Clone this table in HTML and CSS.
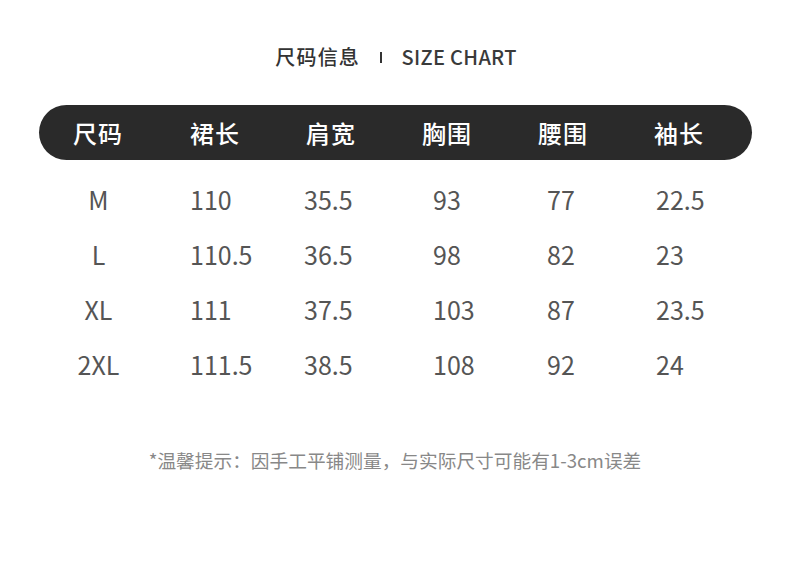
FILE: index.html
```html
<!DOCTYPE html>
<html lang="zh-CN">
<head>
<meta charset="utf-8">
<title>尺码信息</title>
<link rel="stylesheet" href="styles.css">
</head>
<body>
<div class="page">
  <div class="title">
    <span class="title-cn">尺码信息</span>
    <span class="sep"></span>
    <span class="title-en">SIZE CHART</span>
  </div>
  <div class="table">
    <div class="row head">
      <div class="c c0">尺码</div>
      <div class="c c1">裙长</div>
      <div class="c c2">肩宽</div>
      <div class="c c3">胸围</div>
      <div class="c c4">腰围</div>
      <div class="c c5">袖长</div>
    </div>
    <div class="body">
      <div class="row">
        <div class="c c0">M</div><div class="c c1">110</div><div class="c c2">35.5</div><div class="c c3">93</div><div class="c c4">77</div><div class="c c5">22.5</div>
      </div>
      <div class="row">
        <div class="c c0">L</div><div class="c c1">110.5</div><div class="c c2">36.5</div><div class="c c3">98</div><div class="c c4">82</div><div class="c c5">23</div>
      </div>
      <div class="row">
        <div class="c c0">XL</div><div class="c c1">111</div><div class="c c2">37.5</div><div class="c c3">103</div><div class="c c4">87</div><div class="c c5">23.5</div>
      </div>
      <div class="row">
        <div class="c c0">2XL</div><div class="c c1">111.5</div><div class="c c2">38.5</div><div class="c c3">108</div><div class="c c4">92</div><div class="c c5">24</div>
      </div>
    </div>
  </div>
  <p class="note">*温馨提示：因手工平铺测量，与实际尺寸可能有1-3cm误差</p>
</div>
</body>
</html>
```

FILE: styles.css
```css
html, body {
  margin: 0;
  padding: 0;
  background: #ffffff;
}
body {
  font-family: "Noto Sans CJK SC", "Noto Sans", sans-serif;
  width: 790px;
  height: 586px;
  overflow: hidden;
}
.page {
  display: flex;
  flex-direction: column;
  align-items: flex-start;
}
.title {
  align-self: center;
  margin-top: 42px;
  margin-left: 2px;
  height: 30px;
  display: flex;
  align-items: center;
  gap: 20px;
  color: #333333;
  font-size: 20px;
  line-height: 30px;
  font-weight: 500;
}
.title-cn {
  letter-spacing: 1.2px;
}
.sep {
  width: 1.5px;
  height: 11px;
  background: #333333;
}
.title-en {
  letter-spacing: 0.3px;
  color: #3a3a3a;
}
.table {
  margin-top: 33px;
  margin-left: 39px;
  width: 713px;
}
.row {
  display: grid;
  grid-template-columns: 118px repeat(5, 116px);
  height: 55px;
  align-items: center;
}
.head {
  background: #2a2a2a;
  border-radius: 28px;
  color: #ffffff;
  font-size: 24px;
  font-weight: 500;
  padding-bottom: 1px;
  box-sizing: border-box;
}
.head .c {
  text-align: center;
  letter-spacing: 1px;
}
.body {
  margin-top: 11px;
}
.body .row {
  color: #555555;
  font-size: 25px;
}
.body .c0 {
  text-align: center;
  padding-left: 1px;
}
.body .c1 { padding-left: 33px; }
.body .c2 { padding-left: 31px; }
.body .c3 { padding-left: 44px; }
.body .c4 { padding-left: 42px; }
.body .c5 { padding-left: 35px; }
.note {
  align-self: center;
  margin: 56px 0 0 0;
  font-size: 18.7px;
  line-height: 26px;
  color: #888888;
}
```
